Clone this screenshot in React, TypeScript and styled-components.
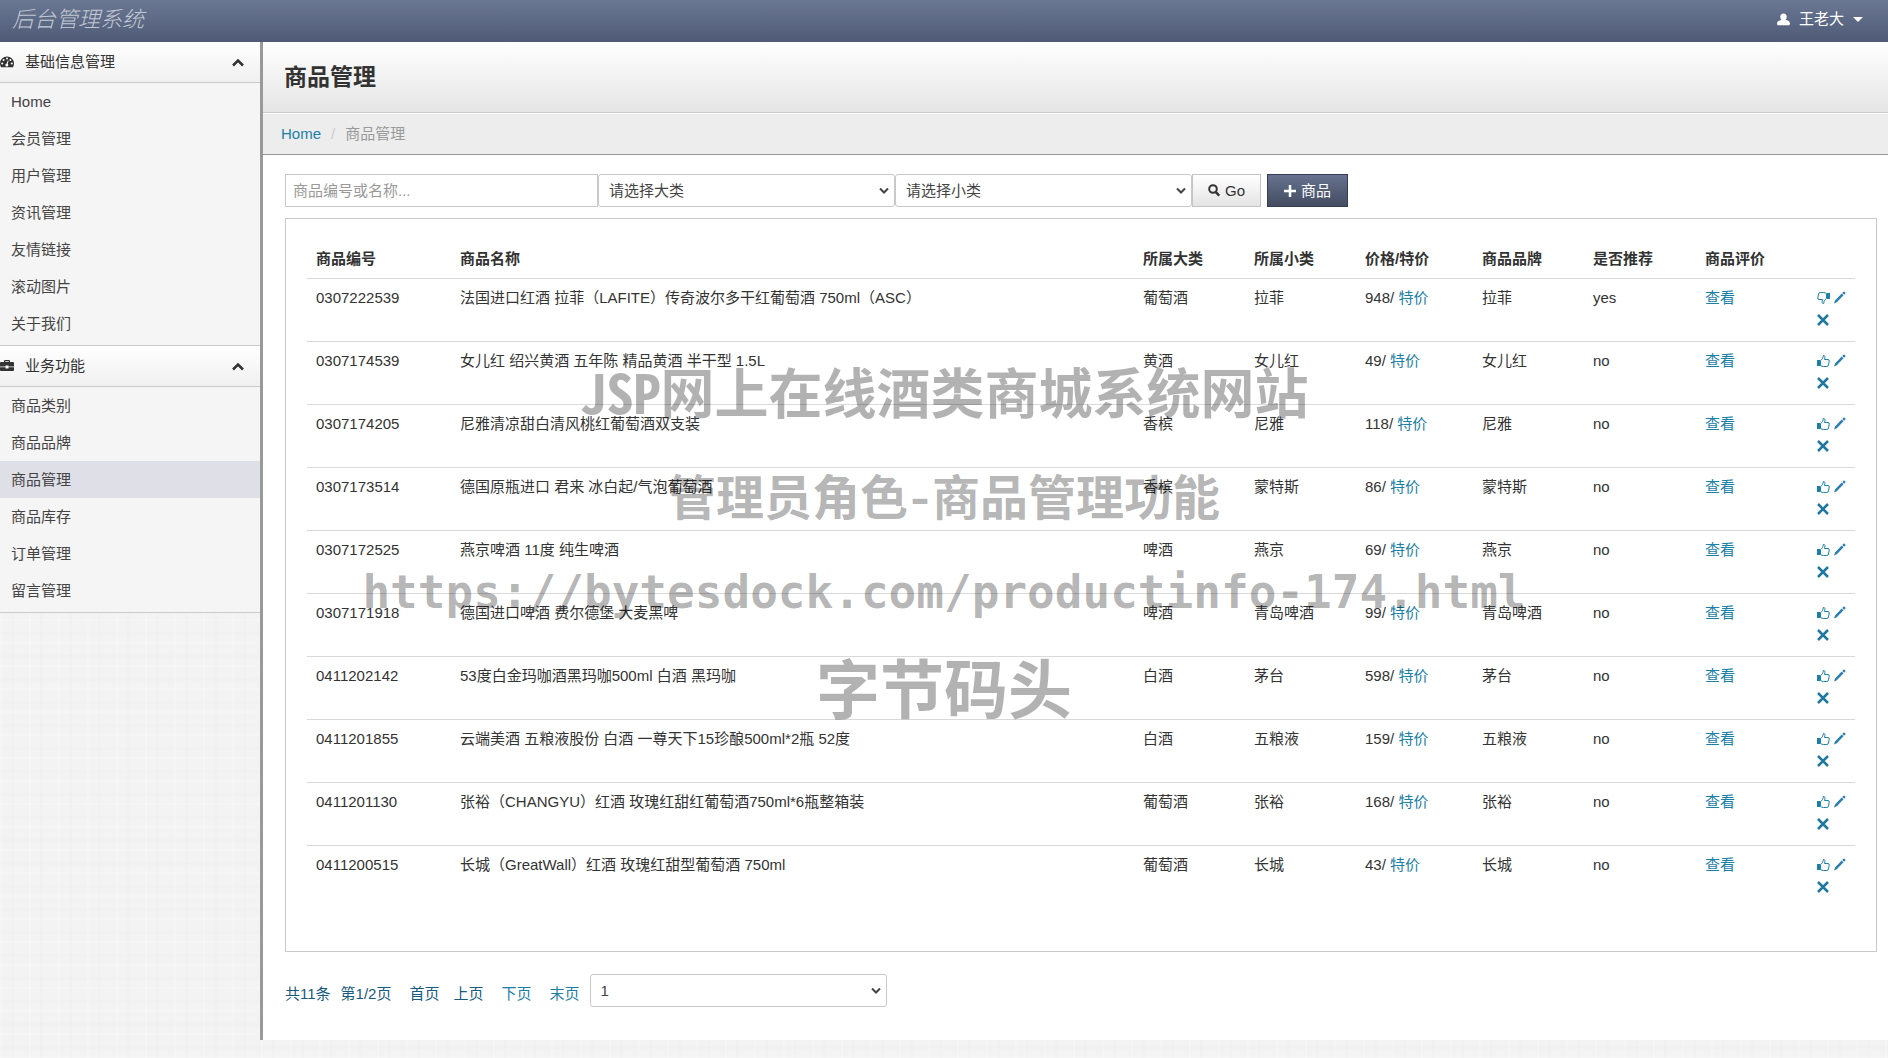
import React from 'react';
import styled, { createGlobalStyle } from 'styled-components';

const GlobalStyle = createGlobalStyle`
  * { box-sizing: border-box; }
  body {
    margin: 0;
    color: #333;
    font: 15px/22px "Liberation Sans", "Noto Sans CJK SC", sans-serif;
    background-color: #f3f3f3;
    background-image:
      repeating-linear-gradient(90deg, rgba(255,255,255,.2) 0 2px, transparent 2px 11px, rgba(0,0,0,.006) 11px 14px, transparent 14px 29px),
      repeating-linear-gradient(0deg, rgba(255,255,255,.2) 0 2px, transparent 2px 9px, rgba(0,0,0,.006) 9px 12px, transparent 12px 23px);
  }
  input, select, button { font: inherit; margin: 0; }
  a { color: #1a80a8; text-decoration: none; }
`;

const TopBar = styled.header`
  display: flex;
  align-items: center;
  justify-content: space-between;
  height: 42px;
  padding: 0 25px 4px 12px;
  background: linear-gradient(#6b7893, #4f5b76);
`;
const Brand = styled.a`
  padding-bottom: 4px;
  color: #c2c8d4;
  font-size: 22px;
  font-weight: 300;
  font-style: italic;
  font-family: "Noto Sans CJK SC", sans-serif;
`;
const UserButton = styled.button`
  display: flex;
  align-items: center;
  gap: 9px;
  padding: 0;
  border: 0;
  background: none;
  color: #fff;
`;
const Caret = styled.span`
  border: 5px solid transparent;
  border-top-color: #fff;
  border-bottom: 0;
`;

const Shell = styled.div`
  display: flex;
  min-height: calc(100vh - 60px);
  margin-bottom: 18px;
`;
const Sidebar = styled.nav`
  flex: 0 0 263px;
  border-right: 3px solid #999;
`;
const SectionHead = styled.button`
  display: flex;
  align-items: center;
  width: 100%;
  height: 41px;
  padding: 0 16px 0 0;
  border: 0;
  border-bottom: 1px solid #c9c9c9;
  background: linear-gradient(#fff, #f0f0f0);
  color: #333;
  text-align: left;
`;
const SectionTitle = styled.span`
  flex: 1;
  padding-left: 11px;
`;
const NavList = styled.ul`
  margin: 0;
  padding: 0 0 3px;
  list-style: none;
  background: #f5f5f5;
  border-bottom: 1px solid #c9c9c9;
`;
const NavLink = styled.a<{ $active?: boolean }>`
  display: block;
  padding: 0 11px;
  line-height: 37px;
  color: #444;
  background: ${p => (p.$active ? '#dfdfe8' : 'transparent')};
`;

const Main = styled.main`
  flex: 1;
  min-width: 0;
  background: #fff;
`;
const TitleBar = styled.div`
  height: 71px;
  border-bottom: 1px solid #c9c9c9;
  background: linear-gradient(#fff, #e5e5e5);
`;
const Title = styled.h1`
  margin: 0;
  padding: 0 21px;
  font-size: 23px;
  line-height: 70px;
  font-weight: 700;
`;
const Crumbs = styled.ol`
  display: flex;
  gap: 10px;
  margin: 0;
  padding: 9px 18px;
  list-style: none;
  border-top: 1px solid #fff;
  border-bottom: 1px solid #999;
  background: #ededed;
  color: #999;
`;
const Slash = styled.li`
  color: #ccc;
`;
const Content = styled.div`
  padding: 19px 11px 33px 22px;
`;
const Filters = styled.form`
  display: flex;
  margin-bottom: 11px;
`;
const TextField = styled.input`
  width: 313px;
  height: 33px;
  padding: 0 7px;
  border: 1px solid #c9c9c9;
  &::placeholder { color: #999; opacity: 1; }
`;
const SelectWrap = styled.span`
  display: grid;
  width: 297px;
  align-items: center;
  & > * { grid-area: 1 / 1; }
  & > svg { justify-self: end; margin-right: 6px; pointer-events: none; }
`;
const Select = styled.select`
  appearance: none;
  width: 100%;
  height: 33px;
  padding: 0 10px;
  border: 1px solid #c9c9c9;
  border-radius: 3px;
  background: #fff;
  color: #444;
`;
const Button = styled.button<{ $primary?: boolean }>`
  display: flex;
  align-items: center;
  justify-content: center;
  gap: 5px;
  width: ${p => (p.$primary ? 81 : 69)}px;
  height: 33px;
  padding: 0;
  margin-right: 6px;
  border: 1px solid ${p => (p.$primary ? '#353d50' : '#c4c4c4')};
  background: ${p => (p.$primary ? 'linear-gradient(#66728f, #434c60)' : 'linear-gradient(#fff, #e4e4e4)')};
  color: ${p => (p.$primary ? '#fff' : '#333')};
`;

const Panel = styled.section`
  padding: 21px 21px 43px;
  border: 1px solid #c9c9c9;
`;
const Table = styled.table`
  width: 100%;
  table-layout: fixed;
  border-collapse: separate;
  border-spacing: 0;
`;
const Th = styled.th<{ $w?: number }>`
  width: ${p => (p.$w ? p.$w + 'px' : 'auto')};
  padding: 8px 9px;
  text-align: left;
  white-space: nowrap;
`;
const Td = styled.td`
  height: 63px;
  padding: 8px 9px 10px;
  border-top: 1px solid #d9d9d9;
  vertical-align: top;
`;
const Actions = styled.div`
  display: flex;
  flex-wrap: wrap;
  column-gap: 4px;
`;
const IconLink = styled.a`
  display: flex;
  align-items: center;
  height: 22px;
`;

const Pager = styled.div`
  display: flex;
  align-items: center;
  margin-top: 22px;
`;
const PageItem = styled.a<{ $dim?: boolean; $gap: number }>`
  margin-right: ${p => p.$gap}px;
  padding-top: 6px;
  color: ${p => (p.$dim ? '#165a80' : '#1a80a8')};
`;

const Watermark = styled.div`
  position: absolute;
  inset: 0 0 auto;
  padding-top: 339px;
  pointer-events: none;
  text-align: center;
  color: rgba(0, 0, 0, .3);
  font-family: "Noto Sans CJK SC", sans-serif;
  font-weight: 700;
  font-feature-settings: "hwid";
  white-space: nowrap;
`;
const MarkLine = styled.div<{ $size: number; $line: number; $mono?: boolean }>`
  font-size: ${p => p.$size}px;
  line-height: ${p => p.$line}px;
  font-family: ${p => (p.$mono ? '"DejaVu Sans Mono", monospace' : 'inherit')};
`;

const GaugeIcon = () => (
  <svg width="14" height="14" viewBox="0 0 14 14" aria-hidden="true">
    <path fill="#333" d="M7 1.5a7 7 0 0 0-7 7c0 1.4.4 2.700 1 3.800h12c.6-1.100 1-2.400 1-3.800a7 7 0 0 0-7-7z" />
    <g fill="#fff"><circle cx="2.200" cy="8.500" r="1" /><circle cx="3.600" cy="5.100" r="1" /><circle cx="7" cy="3.600" r="1" /><circle cx="10.400" cy="5.100" r="1" /><circle cx="11.800" cy="8.500" r="1" /><circle cx="6.800" cy="10" r="1.500" /></g>
    <path stroke="#fff" strokeWidth="1" d="M6.900 10l1.200-4.300" />
  </svg>
);
const CaseIcon = () => (
  <svg width="14" height="14" viewBox="0 0 14 14" aria-hidden="true">
    <path fill="#333" fillRule="evenodd" d="M4 3V2q0-1 1-1h4q1 0 1 1v1h3q1 0 1 1v3.500H8.500v-1h-3v1H0V4q0-1 1-1zM5.200 3h3.600v-.8H5.200zM0 8.300h5.500v1.200h3V8.300H14V11q0 1-1 1H1q-1 0-1-1z" />
  </svg>
);
const ChevronUp = () => (
  <svg width="12" height="9" viewBox="0 0 12 9" aria-hidden="true">
    <path fill="none" stroke="#333" strokeWidth="2.500" d="M1 7.500l5-5 5 5" />
  </svg>
);
const ChevronDown = () => (
  <svg width="10" height="8" viewBox="0 0 10 8" aria-hidden="true">
    <path fill="none" stroke="#444" strokeWidth="2" d="M1 1.500l4 4 4-4" />
  </svg>
);
const UserIcon = () => (
  <svg width="13" height="13" viewBox="0 0 13 13" aria-hidden="true">
    <path fill="#fff" d="M6.500.5c2 0 3.200 1.400 3.200 3.300 0 1.300-.5 2.300-1.200 3C11 7.400 13 8.500 13 10.500c0 1-.5 1.800-1.300 1.800H1.300C.5 12.300 0 11.500 0 10.500 0 8.500 2 7.400 4.500 6.800c-.7-.7-1.200-1.700-1.200-3C3.300 1.900 4.500.5 6.500.5z" />
  </svg>
);
const SearchIcon = () => (
  <svg width="12" height="13" viewBox="0 0 12 13" aria-hidden="true">
    <circle cx="5" cy="5" r="3.800" fill="none" stroke="#333" strokeWidth="2" />
    <path stroke="#333" strokeWidth="2.500" d="M7.700 7.900l3.500 3.800" />
  </svg>
);
const PlusIcon = () => (
  <svg width="12" height="12" viewBox="0 0 12 12" aria-hidden="true">
    <path stroke="#fff" strokeWidth="2.500" d="M6 0v12M0 6h12" />
  </svg>
);
const ThumbIcon = ({ down }: { down?: boolean }) => (
  <svg width="13" height="14" viewBox="0 0 13 14" aria-hidden="true">
    <g transform={down ? 'rotate(180 6.500 7)' : undefined}>
      <path fill="#1a80a8" d="M0 6h3v6H0z" />
      <path fill="none" stroke="#1a80a8" strokeLinejoin="round" d="M3.500 6.500C5.500 5.500 6 3.800 6.300 1.500c1.800-.3 2 1.500 1.200 4H11q1.500.2 1.200 1.500L11.500 11q-.3 1.500-1.700 1.500H6.500q-1.500 0-3-1z" />
    </g>
  </svg>
);
const PencilIcon = () => (
  <svg width="12" height="14" viewBox="0 0 12 14" aria-hidden="true">
    <path fill="#2a7fb0" d="M0 12.500l1-3 6.700-7 1.800 1.800-6.700 7zM8.300 1.900L9.500.7q.5-.5 1 0l.8.8q.5.500 0 1l-1.200 1.200z" />
  </svg>
);
const CrossIcon = () => (
  <svg width="12" height="12" viewBox="0 0 12 12" aria-hidden="true">
    <path stroke="#1f789f" strokeWidth="2.500" d="M1 1l10 10M11 1L1 11" />
  </svg>
);

const base = ['Home', '会员管理', '用户管理', '资讯管理', '友情链接', '滚动图片', '关于我们'];
const business = ['商品类别', '商品品牌', '商品管理', '商品库存', '订单管理', '留言管理'];

const columns: [string, number?][] = [
  ['商品编号', 144], ['商品名称'], ['所属大类', 111], ['所属小类', 111], ['价格/特价', 117],
  ['商品品牌', 111], ['是否推荐', 112], ['商品评价', 112], ['', 47],
];

// id, name, category, sub-category, price, recommended; the brand equals the sub-category
const goods: [string, string, string, string, number, boolean][] = [
  ['0307222539', '法国进口红酒 拉菲（LAFITE）传奇波尔多干红葡萄酒 750ml（ASC）', '葡萄酒', '拉菲', 948, true],
  ['0307174539', '女儿红 绍兴黄酒 五年陈 精品黄酒 半干型 1.5L', '黄酒', '女儿红', 49, false],
  ['0307174205', '尼雅清凉甜白清风桃红葡萄酒双支装', '香槟', '尼雅', 118, false],
  ['0307173514', '德国原瓶进口 君来 冰白起/气泡葡萄酒', '香槟', '蒙特斯', 86, false],
  ['0307172525', '燕京啤酒 11度 纯生啤酒', '啤酒', '燕京', 69, false],
  ['0307171918', '德国进口啤酒 费尔德堡 大麦黑啤', '啤酒', '青岛啤酒', 99, false],
  ['0411202142', '53度白金玛咖酒黑玛咖500ml 白酒 黑玛咖', '白酒', '茅台', 598, false],
  ['0411201855', '云端美酒 五粮液股份 白酒 一尊天下15珍酿500ml*2瓶 52度', '白酒', '五粮液', 159, false],
  ['0411201130', '张裕（CHANGYU）红酒 玫瑰红甜红葡萄酒750ml*6瓶整箱装', '葡萄酒', '张裕', 168, false],
  ['0411200515', '长城（GreatWall）红酒 玫瑰红甜型葡萄酒 750ml', '葡萄酒', '长城', 43, false],
];

function Section({ icon, title, items, active }: { icon: React.ReactNode; title: string; items: string[]; active?: string }) {
  return (
    <>
      <SectionHead type="button">
        {icon}
        <SectionTitle>{title}</SectionTitle>
        <ChevronUp />
      </SectionHead>
      <NavList>
        {items.map(item => (
          <li key={item}><NavLink href="#" $active={item === active}>{item}</NavLink></li>
        ))}
      </NavList>
    </>
  );
}

function Dropdown({ label, option }: { label: string; option: string }) {
  return (
    <SelectWrap>
      <Select aria-label={label}><option>{option}</option></Select>
      <ChevronDown />
    </SelectWrap>
  );
}

export default function App() {
  return (
    <>
      <GlobalStyle />
      <TopBar>
        <Brand href="#">后台管理系统</Brand>
        <UserButton type="button"><UserIcon />王老大<Caret /></UserButton>
      </TopBar>
      <Shell>
        <Sidebar>
          <Section icon={<GaugeIcon />} title="基础信息管理" items={base} />
          <Section icon={<CaseIcon />} title="业务功能" items={business} active="商品管理" />
        </Sidebar>
        <Main>
          <TitleBar><Title>商品管理</Title></TitleBar>
          <Crumbs>
            <li><a href="#">Home</a></li>
            <Slash>/</Slash>
            <li>商品管理</li>
          </Crumbs>
          <Content>
            <Filters onSubmit={e => e.preventDefault()}>
              <TextField type="text" aria-label="商品编号或名称" placeholder="商品编号或名称..." />
              <Dropdown label="大类" option="请选择大类" />
              <Dropdown label="小类" option="请选择小类" />
              <Button type="submit"><SearchIcon />Go</Button>
              <Button type="button" $primary><PlusIcon />商品</Button>
            </Filters>
            <Panel>
              <Table>
                <thead>
                  <tr>{columns.map(([name, w]) => <Th key={name} $w={w}>{name}</Th>)}</tr>
                </thead>
                <tbody>
                  {goods.map(([id, name, kind, sub, price, rec]) => (
                    <tr key={id}>
                      <Td>{id}</Td>
                      <Td>{name}</Td>
                      <Td>{kind}</Td>
                      <Td>{sub}</Td>
                      <Td>{price}/ <a href="#">特价</a></Td>
                      <Td>{sub}</Td>
                      <Td>{rec ? 'yes' : 'no'}</Td>
                      <Td><a href="#">查看</a></Td>
                      <Td>
                        <Actions>
                          <IconLink href="#" aria-label="推荐"><ThumbIcon down={rec} /></IconLink>
                          <IconLink href="#" aria-label="编辑"><PencilIcon /></IconLink>
                          <IconLink href="#" aria-label="删除"><CrossIcon /></IconLink>
                        </Actions>
                      </Td>
                    </tr>
                  ))}
                </tbody>
              </Table>
            </Panel>
            <Pager>
              <PageItem as="span" $dim $gap={10}>共11条</PageItem>
              <PageItem as="span" $dim $gap={18}>第1/2页</PageItem>
              <PageItem href="#" $dim $gap={14}>首页</PageItem>
              <PageItem href="#" $dim $gap={18}>上页</PageItem>
              <PageItem href="#" $gap={18}>下页</PageItem>
              <PageItem href="#" $gap={10}>末页</PageItem>
              <Dropdown label="页码" option="1" />
            </Pager>
          </Content>
        </Main>
      </Shell>
      <Watermark>
        <MarkLine $size={54} $line={104}>JSP网上在线酒类商城系统网站</MarkLine>
        <MarkLine $size={48} $line={102}>管理员角色-商品管理功能</MarkLine>
        <MarkLine $size={46} $line={94} $mono>https://bytesdock.com/productinfo-174.html</MarkLine>
        <MarkLine $size={64} $line={92}>字节码头</MarkLine>
      </Watermark>
    </>
  );
}
